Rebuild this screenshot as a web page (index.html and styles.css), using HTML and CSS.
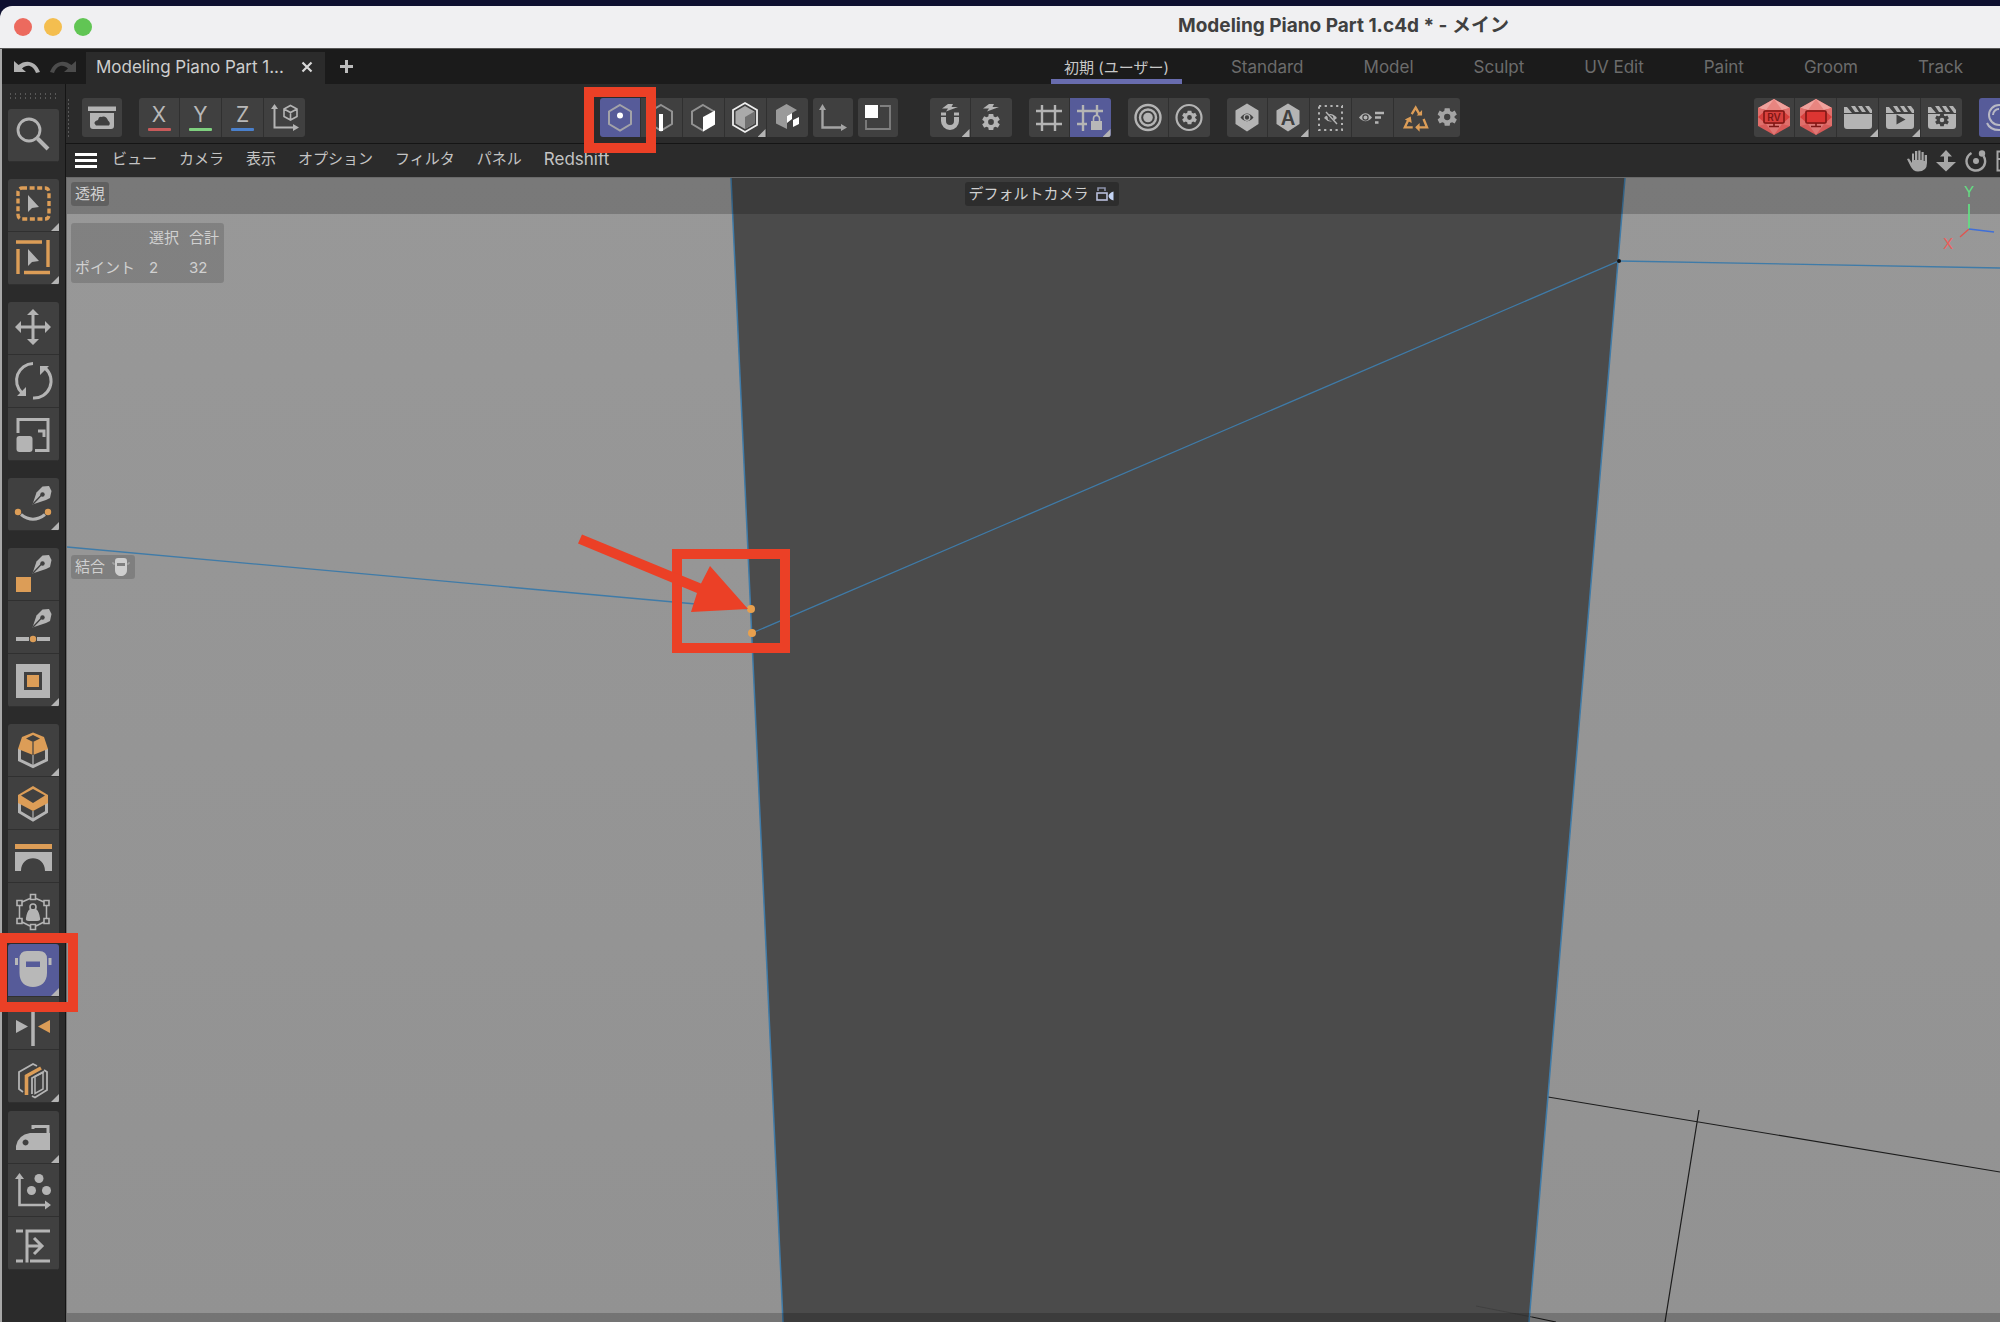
FILE: index.html
```html
<!DOCTYPE html>
<html lang="ja">
<head>
    <meta charset="utf-8">
    <title>Modeling Piano Part 1.c4d * - メイン</title>
    <link rel="stylesheet" href="styles.css">
</head>
<body>
    <!-- 共通アイコン -->
    <svg class="defs" width="0" height="0" aria-hidden="true">
        <symbol id="cursor" viewBox="0 0 12 18"><path d="M1 0V17L5 13L12 12Z" fill="#b4b4b4"/></symbol>
        <symbol id="pen" viewBox="0 0 20 20">
            <path d="M10.500 1.500L17 1L19.500 6L18 13L14 15L0.500 19.500L4.500 7.500Z" fill="#b4b4b4"/>
            <path d="M1 19L9.500 10" stroke="#404040" stroke-width="1.300"/>
            <circle cx="10.500" cy="9.500" r="2.200" fill="#404040"/>
        </symbol>
        <symbol id="gear" viewBox="-10 -10 20 20">
            <path fill-rule="evenodd" d="M-2.500 -9H2.500L3 -6.200L5 -5.200L7.600 -6.500L9.800 -2.500L7.500 -0.800V0.800L9.800 2.500L7.600 6.500L5 5.200L3 6.200L2.500 9H-2.500L-3 6.200L-5 5.200L-7.600 6.500L-9.800 2.500L-7.500 0.800V-0.800L-9.800 -2.500L-7.600 -6.500L-5 -5.200L-3 -6.200ZM0 -3.200A3.200 3.200 0 1 0 0 3.200A3.200 3.200 0 1 0 0 -3.200Z"/>
        </symbol>
        <symbol id="bolt" viewBox="0 0 18 8"><path d="M7 0H12L10.500 3H17L5 7.500L7 4.500H1Z" fill="#b4b4b4"/></symbol>
        <symbol id="clapper" viewBox="0 0 28 26">
            <path d="M0 9H28V21a3 3 0 0 1-3 3H3a3 3 0 0 1-3-3ZM0 2H3L8 8H0ZM7 1H11L15 7H11ZM14 1H18L22 7H18ZM21 1H25L28 5V8H26Z" fill="#b4b4b4"/>
        </symbol>
        <symbol id="ruby" viewBox="0 0 32 36">
            <path d="M16 0L32 9V27L16 36L0 27V9Z" fill="#d75a58"/>
            <path d="M16 0L32 9L24 11H8L0 9Z" fill="#f0a29d"/>
            <path d="M16 0L24 11H8Z" fill="#e88580"/>
            <path d="M0 9L8 11V25L0 27Z M32 9L24 11V25L32 27Z" fill="#e06f6b"/>
            <path d="M0 18L8 11H24L32 18L24 25H8Z" fill="#d8403d"/>
            <path d="M16 36L8 25H24Z" fill="#dd7774"/>
        </symbol>
    </svg>

    <header class="titlebar">
        <div class="lights"><i class="red"></i><i class="yellow"></i><i class="green"></i></div>
        <h1>Modeling Piano Part 1.c4d * - メイン</h1>
    </header>

    <div class="app">
        <div class="tabbar">
            <div class="history">
                <button aria-label="取り消し"><svg width="26" height="14" viewBox="0 0 26 14"><path d="M0 1V12H12L8 8.500C13 4 19 5 22 13L26 12C22 1 12 -1 4.500 5Z" fill="#b0b0b0"/></svg></button>
                <button aria-label="やり直し"><svg width="26" height="14" viewBox="0 0 26 14"><path d="M26 1V12H14L18 8.500C13 4 7 5 4 13L0 12C4 1 14 -1 21.500 5Z" fill="#4c4c4c"/></svg></button>
            </div>
            <div class="filetab">
                <span>Modeling Piano Part 1...</span>
                <button aria-label="閉じる"><svg width="12" height="12" viewBox="0 0 12 12"><path d="M1.500 1.500L10.500 10.500M10.500 1.500L1.500 10.500" stroke="#d8d8d8" stroke-width="2.200"/></svg></button>
            </div>
            <button class="add" aria-label="追加"><svg width="13" height="13" viewBox="0 0 13 13"><path d="M6.500 0V13M0 6.500H13" stroke="#bcbcbc" stroke-width="3"/></svg></button>
            <nav class="layouts">
                <button class="current">初期 (ユーザー)</button>
                <button>Standard</button>
                <button>Model</button>
                <button>Sculpt</button>
                <button>UV Edit</button>
                <button>Paint</button>
                <button>Groom</button>
                <button>Track</button>
            </nav>
        </div>

        <div class="workspace">
            <!-- 左ツールパレット -->
            <aside class="rail">
                <div class="grip"></div>
                <div class="tools">
                    <button aria-label="検索"><svg viewBox="0 0 51 53"><circle cx="21" cy="21" r="11" fill="none" stroke="#b4b4b4" stroke-width="2.800"/><path d="M29.500 29.500L40 40" stroke="#b4b4b4" stroke-width="4"/></svg></button>
                </div>
                <div class="tools">
                    <button class="more" aria-label="長方形選択"><svg viewBox="0 0 51 53"><rect x="10" y="9" width="31" height="31" rx="4" fill="none" stroke="#dc9d57" stroke-width="3.400" stroke-dasharray="5 2.600"/><use href="#cursor" x="19" y="16" width="12" height="18"/></svg></button>
                    <button class="more" aria-label="選択"><svg viewBox="0 0 51 53"><path d="M8 10H34M40 8V35M10 17V42M16 40.500H42" stroke="#dc9d57" stroke-width="3.400"/><use href="#cursor" x="19" y="17" width="12" height="18"/></svg></button>
                </div>
                <div class="tools">
                    <button aria-label="移動"><svg viewBox="0 0 51 53"><path d="M25 11V38M12 25H38" stroke="#b4b4b4" stroke-width="3"/><path d="M25 7L31 13H19ZM25 43L31 37H19ZM7 25L13 19V31ZM43 25L37 19V31Z" fill="#b4b4b4"/></svg></button>
                    <button aria-label="回転"><svg viewBox="0 0 51 53"><path d="M25 8.500A17 17 0 0 0 14 38M25 43A17 17 0 0 0 37 13" fill="none" stroke="#b4b4b4" stroke-width="3"/><path d="M18 32V41H9ZM32 11H41L32 20Z" fill="#b4b4b4"/></svg></button>
                    <button aria-label="スケール"><svg viewBox="0 0 51 53"><path d="M10 25V11.500H40V42.500H27M30 23H36V29" fill="none" stroke="#b4b4b4" stroke-width="3"/><rect x="8.500" y="28" width="16" height="16" rx="3" fill="#b4b4b4"/></svg></button>
                </div>
                <div class="tools">
                    <button class="more" aria-label="スプラインペン"><svg viewBox="0 0 51 53"><use href="#pen" x="24" y="7" width="20" height="20"/><path d="M13 36.500Q25 46 37 36.500" fill="none" stroke="#b4b4b4" stroke-width="3"/><circle cx="10" cy="34" r="3.200" fill="#dc9d57"/><circle cx="40" cy="34" r="3.200" fill="#dc9d57"/></svg></button>
                </div>
                <div class="tools">
                    <button aria-label="ポリゴンペン"><svg viewBox="0 0 51 53"><use href="#pen" x="24" y="6" width="20" height="20"/><rect x="8" y="29" width="15" height="15" fill="#dc9d57"/></svg></button>
                    <button aria-label="ラインカット"><svg viewBox="0 0 51 53"><use href="#pen" x="24" y="7" width="20" height="20"/><path d="M8 38H21M29 38H42" stroke="#b4b4b4" stroke-width="4"/><circle cx="25" cy="38" r="3.200" fill="#dc9d57"/></svg></button>
                    <button class="more" aria-label="面内に押し出し"><svg viewBox="0 0 51 53"><rect x="8" y="10" width="34" height="34" fill="#b4b4b4"/><rect x="16" y="18" width="18" height="18" fill="#404040"/><rect x="19" y="21" width="12" height="12" fill="#dc9d57"/></svg></button>
                </div>
                <div class="tools">
                    <button class="more" aria-label="ベベル"><svg viewBox="0 0 51 53"><path d="M11.500 25V36L25 42.500L38.500 36V25" fill="none" stroke="#b4b4b4" stroke-width="3"/><path d="M25 8.500L36 13L40 25L25 31L10 25L14 13Z" fill="#dc9d57"/><path d="M25 11L32 14.500L25 18L18 14.500Z" fill="#404040"/><path d="M25 18V31" stroke="#404040" stroke-width="1.200"/><path d="M25 31V42" stroke="#b4b4b4" stroke-width="1.200"/></svg></button>
                    <button aria-label="押し出し"><svg viewBox="0 0 51 53"><path d="M11.500 26V35L25 43L38.500 35V26" fill="none" stroke="#b4b4b4" stroke-width="3"/><path d="M25 9L40 18V26L25 34L10 26V18Z" fill="#dc9d57"/><path d="M25 12L37 18.500L25 26L13 18.500Z" fill="#404040"/><path d="M25 34V42" stroke="#b4b4b4" stroke-width="1.200"/></svg></button>
                    <button aria-label="ブリッジ"><svg viewBox="0 0 51 53"><rect x="7" y="14" width="37" height="5" fill="#dc9d57"/><path d="M7 22H44V41H37C37 24 13 24 13 41H7Z" fill="#b4b4b4"/></svg></button>
                    <button aria-label="ウェイト"><svg viewBox="0 0 51 53"><path d="M14 19L22 15.500M28 15.500L36 19M11.500 23V35M38.500 23V35M14 39L22 43M28 43L36 39" stroke="#b4b4b4" stroke-width="1.500"/><g fill="#404040" stroke="#b4b4b4" stroke-width="1.600"><path d="M22.500 11.500h5v5h-5ZM9 17.500h5v5h-5ZM36 17.500h5v5h-5ZM9 35.500h5v5h-5ZM36 35.500h5v5h-5ZM22.500 41.500h5v5h-5Z"/><circle cx="25" cy="24" r="3"/></g><path d="M22 26H28Q31 28 32 35Q33 38 29 38H21Q17 38 18 35Q19 28 22 26Z" fill="#b4b4b4"/></svg></button>
                </div>
                <div class="tools tight">
                    <button class="more active" aria-label="結合"><svg viewBox="0 0 51 53"><path d="M7 14h3v7h-3ZM40.500 14h3v7h-3ZM19 7H31Q39 7 39 15V29C39 38 33 43 25 43S11.500 38 11.500 29V15Q11.500 7 19 7ZM18 17.500V23H32V17.500Z" fill-rule="evenodd" fill="#b8b8b8"/></svg></button>
                    <button aria-label="対称"><svg viewBox="0 0 51 53"><path d="M25 12V49" stroke="#b4b4b4" stroke-width="3.500"/><path d="M8 23V36L20 29.500Z" fill="#b4b4b4"/><path d="M42 23V36L30 29.500Z" fill="#dc9d57"/></svg></button>
                    <button class="more" aria-label="ループカット"><svg viewBox="0 0 51 53"><path d="M15 42L11 39V22L25 14L29 16M24 46L27 47.500L39 40V22L36 20M24 44V28L36 21.500" fill="none" stroke="#b4b4b4" stroke-width="1.800"/><path d="M27 26.500L35 22.500V39L27 43.500Z" fill="none" stroke="#b4b4b4" stroke-width="1.500"/><path d="M18.500 45V26L33 18" fill="none" stroke="#dc9d57" stroke-width="3.600"/></svg></button>
                </div>
                <div class="tools tight">
                    <button class="more" aria-label="アイロン"><svg viewBox="0 0 51 53"><path d="M25 18V15.500H40V24" fill="none" stroke="#b4b4b4" stroke-width="3"/><path fill-rule="evenodd" d="M22 22H42V39H8V35Q10 24 22 22ZM17.500 28.500a3 3 0 1 0 .1 0Z" fill="#b4b4b4"/></svg></button>
                    <button aria-label="軸の配置"><svg viewBox="0 0 51 53"><path d="M11.500 14V41H38" fill="none" stroke="#b4b4b4" stroke-width="2.600"/><path d="M11.500 9L16 15H7ZM43 41L37 36.500V45.500Z" fill="#b4b4b4"/><g fill="#b4b4b4"><circle cx="31" cy="14.500" r="4.500"/><circle cx="23.500" cy="26.500" r="4.500"/><circle cx="38.500" cy="26.500" r="4.500"/></g></svg></button>
                    <button aria-label="整列"><svg viewBox="0 0 51 53"><path d="M8 14H15M19 14H42M8 44H15M22 44H42M19 12.500V45.500M19 29H34M26 21L34 29L26 37" fill="none" stroke="#b4b4b4" stroke-width="3"/></svg></button>
                </div>
            </aside>

            <main class="main">
                <!-- 上部ツールバー -->
                <div class="toolbar">
                    <div class="cluster left">
                        <div class="vgrip"></div>
                        <div class="set"><button aria-label="アセット"><svg viewBox="0 0 40 39"><path d="M6 8.500H34V13H6Z" fill="#b4b4b4"/><path fill-rule="evenodd" d="M8 15H32V28Q32 31 29 31H11Q8 31 8 28ZM14 27.500H27Q29 25 26 22.500Q24 17 19 19Q17 18 16 22Q10 24 14 27.500Z" fill="#b4b4b4"/></svg></button></div>
                        <div class="set">
                            <button class="axis x">X</button>
                            <button class="axis y">Y</button>
                            <button class="axis z">Z</button>
                            <button aria-label="座標系"><svg viewBox="0 0 40 39"><path d="M9.500 10V29.500H30" fill="none" stroke="#b4b4b4" stroke-width="2"/><path d="M9.500 6L13 11H6ZM34 29.500L28 26V33Z" fill="#b4b4b4"/><path d="M25.500 7.500L32 11V18.500L25.500 22L19 18.500V11ZM19 11L25.500 14.500L32 11M25.500 14.500V22" fill="none" stroke="#b4b4b4" stroke-width="1.600"/></svg></button>
                        </div>
                    </div>

                    <div class="cluster center">
                        <div class="modes">
                            <div class="set">
                                <button class="active" aria-label="ポイント"><svg viewBox="0 0 40 39"><path d="M20 7L31 13.500V26L20 32.500L9 26V13.500Z" fill="none" stroke="#a2a2a8" stroke-width="2"/><circle cx="20" cy="17.500" r="3" fill="#fff"/></svg></button>
                                <button aria-label="エッジ"><svg viewBox="0 0 40 39"><path d="M20 7L31 13.500V26L20 32.500L9 26V13.500Z" fill="none" stroke="#929292" stroke-width="2"/><path d="M20 16V33" stroke="#fff" stroke-width="4"/></svg></button>
                                <button aria-label="ポリゴン"><svg viewBox="0 0 40 39"><path d="M20 7L31 13.500V26L20 32.500L9 26V13.500Z" fill="none" stroke="#929292" stroke-width="2"/><path d="M20 19L32 12.500V26.500L20 33.500Z" fill="#fff"/></svg></button>
                                <button class="more" aria-label="モデル"><svg viewBox="0 0 40 39"><path d="M20 5L32 12V27L20 34L8 27V12Z" fill="#404040" stroke="#eee" stroke-width="1.800"/><path d="M20 8L29.500 13.500V25.500L20 31L10.500 25.500V13.500Z" fill="#aaa"/><path d="M20 19L29.500 13.500V25.500L20 31Z" fill="#707070"/></svg></button>
                                <button aria-label="オブジェクト"><svg viewBox="0 0 40 39"><path d="M19.500 6L30 12L20 18V31L9 25.500V12Z" fill="#9a9a9a"/><path d="M20 18L25 15V21L20 25ZM26 22L32 19V26L26 29Z" fill="#fff"/></svg></button>
                            </div>
                            <div class="set"><button aria-label="軸"><svg viewBox="0 0 40 39"><path d="M9.500 10V29.500H30" fill="none" stroke="#a4a4a4" stroke-width="2.400"/><path d="M9.500 6L13 12H6ZM34 29.500L28 26V33Z" fill="#a4a4a4"/></svg></button></div>
                            <div class="set"><button aria-label="ソロ"><svg viewBox="0 0 40 39"><path d="M22 8H32V31H8V22" fill="none" stroke="#808080" stroke-width="1.800"/><rect x="7" y="7" width="13" height="13" fill="#fff"/></svg></button></div>
                        </div>
                        <div class="set">
                            <button class="more" aria-label="スナップ"><svg viewBox="0 0 40 39"><use href="#bolt" x="11" y="6" width="18" height="8"/><path d="M13.500 19V23A6.500 6.500 0 0 0 26.500 23V19" fill="none" stroke="#b4b4b4" stroke-width="5"/><path d="M10 18.500H30" stroke="#404040" stroke-width="1.200"/><path d="M11 14.500h5v3h-5ZM24 14.500h5v3h-5Z" fill="#b4b4b4"/></svg></button>
                            <button aria-label="スナップ設定"><svg viewBox="0 0 40 39"><use href="#bolt" x="11" y="6" width="18" height="8"/><use href="#gear" x="11" y="15" width="18" height="18" fill="#b4b4b4"/></svg></button>
                        </div>
                        <div class="set">
                            <button aria-label="グリッド"><svg viewBox="0 0 40 39"><path d="M13 7V33M26 7V33M7 13H33M7 26H33" stroke="#b4b4b4" stroke-width="2.400"/></svg></button>
                            <button class="more active" aria-label="グリッド固定"><svg viewBox="0 0 40 39"><path d="M13 7V33M27 7V18M7 13H33M7 26H17" stroke="#b4b4b4" stroke-width="2.400"/><rect x="21" y="23" width="11" height="9" fill="#b8b8b8"/><path d="M23.500 23V20.500a3 3 0 0 1 6 0V23" fill="none" stroke="#b8b8b8" stroke-width="1.600"/></svg></button>
                        </div>
                        <div class="set">
                            <button aria-label="ソフト選択"><svg viewBox="0 0 40 39"><g fill="none" stroke="#b4b4b4" stroke-width="2.400"><circle cx="20" cy="19.500" r="12.500"/><circle cx="20" cy="19.500" r="8"/></g><circle cx="20" cy="19.500" r="4.800" fill="#b4b4b4"/></svg></button>
                            <button aria-label="ソフト選択設定"><svg viewBox="0 0 40 39"><circle cx="20" cy="19.500" r="12.500" fill="none" stroke="#b4b4b4" stroke-width="2.200"/><use href="#gear" x="13" y="12" width="15" height="15" fill="#b4b4b4"/></svg></button>
                        </div>
                        <div class="set">
                            <button aria-label="表示"><svg viewBox="0 0 40 39"><path d="M20 5.500L31.500 12.500V26L20 33.500L8.500 26V12.500Z" fill="#b4b4b4"/><path d="M13.500 19.500Q20 11.500 26.500 19.500Q20 27 13.500 19.500Z" fill="#404040"/><circle cx="20" cy="19.500" r="2.800" fill="none" stroke="#b4b4b4" stroke-width="1.300"/></svg></button>
                            <button class="more" aria-label="自動"><svg viewBox="0 0 40 39"><path d="M20 5.500L31.500 12.500V26L20 33.500L8.500 26V12.500Z" fill="#b4b4b4"/><text x="20" y="27" class="auto">A</text></svg></button>
                            <button aria-label="非表示"><svg viewBox="0 0 40 39"><rect x="9" y="8" width="23" height="24" fill="none" stroke="#b4b4b4" stroke-width="2" stroke-dasharray="2.200 3.500"/><path d="M14 20Q20.500 12 27 20Q20.500 27 14 20Z" fill="#b4b4b4"/><circle cx="20.500" cy="20" r="2.200" fill="none" stroke="#404040" stroke-width="1.200"/><path d="M15 14L26 26" stroke="#404040" stroke-width="2.600"/><path d="M16 14L27 26" stroke="#b4b4b4" stroke-width="1.400"/></svg></button>
                            <button aria-label="表示順"><svg viewBox="0 0 40 39"><path d="M7 19.500Q13.500 11 20 19.500Q13.500 27 7 19.500Z" fill="#b4b4b4"/><circle cx="13.500" cy="19.500" r="2.600" fill="none" stroke="#404040" stroke-width="1.200"/><path d="M23 15H32M23 19.500H29M23 24.500H26.500" stroke="#b4b4b4" stroke-width="2.400"/></svg></button>
                            <button class="wide" aria-label="リサイクル"><svg viewBox="0 0 67 39"><g fill="none" stroke="#dc9d57" stroke-width="2.400"><path d="M18 16L22 9.500L26 16.500M15 21L11 29.500H19M30 21L33.500 29.500H23"/></g><path d="M23 17.500H28.500V12ZM11 21.500L17 18.500L18 25ZM26 25V34L21.500 29.500Z" fill="#dc9d57"/><use href="#gear" x="44" y="9" width="20" height="20" fill="#a4a4a4"/></svg></button>
                        </div>
                    </div>

                    <div class="cluster right">
                        <div class="set">
                            <button aria-label="レンダービュー"><svg viewBox="0 0 40 39"><use href="#ruby" x="4" y="1" width="32" height="36"/><rect x="10" y="13" width="20" height="12" rx="1" fill="none" stroke="#7d1715" stroke-width="1.600"/><path d="M15 28.500H25M20 25V28" stroke="#7d1715" stroke-width="1.600"/><text x="20" y="23" class="rv">RV</text></svg></button>
                            <button aria-label="IPR"><svg viewBox="0 0 40 39"><use href="#ruby" x="4" y="1" width="32" height="36"/><rect x="10" y="13" width="20" height="12" rx="1" fill="#dc3532" stroke="#7d1715" stroke-width="1.600"/><path d="M15 28.500H25M20 25V28" stroke="#7d1715" stroke-width="1.600"/></svg></button>
                            <button class="more" aria-label="レンダリング"><svg viewBox="0 0 40 39"><use href="#clapper" x="6" y="7" width="28" height="26"/></svg></button>
                            <button class="more" aria-label="画像表示"><svg viewBox="0 0 40 39"><use href="#clapper" x="6" y="7" width="28" height="26"/><path d="M16.500 16.500V26.500L25.500 21.500Z" fill="#404040"/></svg></button>
                            <button aria-label="レンダリング設定"><svg viewBox="0 0 40 39"><use href="#clapper" x="6" y="7" width="28" height="26"/><use href="#gear" x="13" y="15" width="14" height="14" fill="#404040"/></svg></button>
                        </div>
                        <div class="set"><button class="active" aria-label="マテリアル"><svg viewBox="0 0 40 39"><circle cx="20" cy="17" r="10" fill="none" stroke="#b8b8c4" stroke-width="2"/><path d="M14 17A6 6 0 0 1 20 11M8 25Q11 32 20 32T32 25" fill="none" stroke="#b8b8c4" stroke-width="2"/></svg></button></div>
                    </div>
                </div>

                <div class="menubar">
                    <button class="burger" aria-label="メニュー"><i></i><i></i><i></i></button>
                    <nav>
                        <button>ビュー</button>
                        <button>カメラ</button>
                        <button>表示</button>
                        <button>オプション</button>
                        <button>フィルタ</button>
                        <button>パネル</button>
                        <button class="latin">Redshift</button>
                    </nav>
                    <div class="navicons">
                        <svg width="20" height="22" viewBox="0 0 20 22"><path d="M0 9L2 8.500L5 13V3.500h2V10h1V1h2.300V10h1V.5h2.200V10h1V2h2.200V11h1V5h2.300V13Q20 21.500 11 21.500Q6 21.500 3.500 16Z" fill="#a6a6a6"/></svg>
                        <svg width="20" height="22" viewBox="0 0 20 22"><path d="M10 0L16 6.500H12V12H20L10 21.500L0 12H8V6.500H4Z" fill="#a6a6a6"/></svg>
                        <svg width="22" height="22" viewBox="0 0 22 22"><path d="M6.500 3A9.300 9.300 0 1 0 18.500 6" fill="none" stroke="#a6a6a6" stroke-width="2.400"/><circle cx="11" cy="11" r="3" fill="#a6a6a6"/><circle cx="17" cy="3.500" r="3.200" fill="#a6a6a6"/></svg>
                        <svg width="22" height="22" viewBox="0 0 22 22"><path d="M1.500 1.500H20V20.500H1.500ZM1.500 9H20" fill="none" stroke="#a6a6a6" stroke-width="2"/></svg>
                    </div>
                </div>

                <!-- 3Dビュー -->
                <section class="viewport">
                    <svg class="scene" viewBox="67 178 1933 1144" preserveAspectRatio="xMinYMin slice">
                        <path d="M731 178H1625L1529 1322H783Z" fill="#4b4b4b"/>
                        <path d="M1476 1306L1532 1317" stroke="#404040"/>
                        <path d="M1548 1097L2000 1172M1699 1110L1665 1322M1532 1317L1556 1322" fill="none" stroke="#1c1c1c" stroke-width="1.200"/>
                        <path d="M67 547L751 609M752 633L1619 261L2000 268" fill="none" stroke="#3f7ba8" stroke-width="1.300"/>
                        <path d="M731 178L783 1322M1625 178L1529 1322" fill="none" stroke="#3f7ba8" stroke-width="1.500"/>
                        <circle cx="1619" cy="261" r="2" fill="#111"/>
                        <circle cx="751" cy="609" r="4" fill="#e8a04e"/>
                        <circle cx="752" cy="633" r="4" fill="#e8a04e"/>
                    </svg>
                    <div class="topband"></div>
                    <div class="bottomband"></div>
                    <span class="tag view">透視</span>
                    <table class="stats">
                        <tr><th></th><th>選択</th><th>合計</th></tr>
                        <tr><th>ポイント</th><td>2</td><td>32</td></tr>
                    </table>
                    <span class="tag mode">結合 <svg width="20" height="18" viewBox="0 0 20 18"><path fill-rule="evenodd" d="M7 0H13Q16 0 16 3V12C16 16 13 18 10 18S4 16 4 12V3Q4 0 7 0ZM6 5V8H14V5Z" fill="#cfcfcf"/><path d="M1 5H3V7M19 5H17V7" fill="none" stroke="#b0b0b0"/></svg></span>
                    <span class="tag camera">デフォルトカメラ <svg width="20" height="16" viewBox="0 0 20 16"><rect x="2" y="7" width="10" height="7" fill="none" stroke="#b9bfdc" stroke-width="1.600"/><path d="M3 5V2H10V5" fill="none" stroke="#8d92ab" stroke-width="1.600"/><path d="M18.500 5.500V14.500Q14 13 13.500 10Q14 7 18.500 5.500Z" fill="#c4d4f4"/></svg></span>
                    <svg class="gizmo" width="60" height="78" viewBox="0 -6 60 78">
                        <path d="M29 20V45" stroke="#64dc83" stroke-width="1.800"/>
                        <path d="M29 45L20 53" stroke="#e0534f" stroke-width="1.400"/>
                        <path d="M29 45L54 48" stroke="#3f6fd8" stroke-width="1.600"/>
                        <text x="29" y="13" fill="#64dc83">Y</text>
                        <text x="8" y="65" fill="#e8605c">X</text>
                    </svg>
                </section>
            </main>
        </div>
    </div>

    <!-- 強調枠と矢印 -->
    <svg class="notes" viewBox="0 0 2000 1322" preserveAspectRatio="xMinYMin meet">
        <g fill="none" stroke="#eb4026" stroke-width="10">
            <rect x="589" y="92" width="62" height="56"/>
            <rect x="677" y="554" width="108" height="94"/>
            <rect x="2" y="938" width="71" height="69"/>
        </g>
        <path d="M582 534.500L701 583.500L710 566L748 609L691 612L697 593L578 543.500Z" fill="#eb4026"/>
    </svg>
</body>
</html>
```

FILE: styles.css
```css
* {
    box-sizing: border-box;
}

body {
    margin: 0;
    height: 100vh;
    padding-top: 6px;
    display: flex;
    flex-direction: column;
    overflow: hidden;
    background: #0e1030;
    color: #c4c4c4;
    font-family: Inter, "Noto Sans CJK JP", sans-serif;
    font-size: 17px;
}

button {
    margin: 0;
    padding: 0;
    border: 0;
    background: none;
    color: inherit;
    font: inherit;
    display: flex;
    align-items: center;
    justify-content: center;
}

svg {
    display: block;
    flex: none;
}

.defs {
    position: absolute;
}

/* タイトルバー */
.titlebar {
    flex: none;
    height: 43px;
    display: flex;
    align-items: center;
    background: #f0f0f2;
    border-radius: 12px 0 0 0;
    border-bottom: 1px solid #555;
}

.lights {
    display: flex;
    gap: 12px;
    padding-left: 14px;
    width: 58.9%;
}

.lights i {
    width: 18px;
    height: 18px;
    border-radius: 50%;
}

.red { background: #ec6a5e; }
.yellow { background: #f4be4f; }
.green { background: #61c554; }

.titlebar h1 {
    margin: 0;
    padding-bottom: 2px;
    font-size: 19px;
    font-weight: 700;
    line-height: 26px;
    color: #404040;
    white-space: nowrap;
}

.app {
    flex: 1;
    min-height: 0;
    display: flex;
    flex-direction: column;
    border-left: 2px solid #a8a8a8;
    background: #2b2b2b;
}

/* タブ */
.tabbar {
    flex: none;
    height: 35px;
    display: flex;
    align-items: stretch;
    background: #1b1b1b;
}

.history {
    width: 84px;
    padding-left: 12px;
    display: flex;
    align-items: center;
    gap: 10px;
}

.filetab {
    width: 239px;
    margin-top: 3px;
    padding: 0 12px 2px 10px;
    display: flex;
    align-items: center;
    justify-content: space-between;
    background: #2b2b2b;
    color: #cecece;
}

.add {
    padding: 0 15px;
}

.layouts {
    margin-left: auto;
    padding-right: 26px;
    display: flex;
    gap: 38px;
    color: #6c6c6c;
}

.layouts button {
    padding: 0 11px;
    border-top: 5px solid transparent;
    border-bottom: 5px solid transparent;
    white-space: nowrap;
}

.layouts .current {
    padding: 0 13px;
    font-size: 15px;
    color: #c8c8c8;
    border-bottom-color: #686cae;
}

.workspace {
    flex: 1;
    min-height: 0;
    display: flex;
}

/* ツールパレット */
.rail {
    flex: none;
    width: 64px;
    padding: 8px 6px 0;
    border-right: 1px solid #151515;
    overflow: hidden;
}

.grip, .vgrip {
    background-image: radial-gradient(#585858 1px, transparent 1px);
    background-size: 5px 4px;
}

.grip {
    height: 8px;
    margin-bottom: 9px;
}

.tools {
    margin-bottom: 17px;
    border-radius: 3px;
    overflow: hidden;
}

.tools:has(+ .tight), .tools.tight {
    margin-bottom: 8px;
}

.tools button {
    position: relative;
    width: 51px;
    height: 53px;
    background: #404040;
    border-bottom: 1px solid #303030;
}

.tools svg {
    width: 51px;
    height: 53px;
}

.tools .active {
    background: #565b99;
}

.more::after {
    content: "";
    position: absolute;
    right: 0;
    bottom: 0;
    width: 8px;
    height: 8px;
    background: #b4b4b4;
    clip-path: polygon(100% 0, 100% 100%, 0 100%);
}

.main {
    flex: 1;
    min-width: 0;
    display: flex;
    flex-direction: column;
}

/* ツールバー */
.toolbar {
    flex: none;
    height: 60px;
    display: flex;
    align-items: flex-start;
    justify-content: space-between;
    padding-top: 14px;
    border-bottom: 1px solid #151515;
    overflow: hidden;
}

.cluster {
    flex: none;
    display: flex;
    gap: 17px;
}

.vgrip {
    width: 6px;
    margin-right: -7px;
}

.modes {
    display: flex;
    gap: 5px;
    margin-right: 15px;
}

.set {
    display: flex;
    border-radius: 3px;
    overflow: hidden;
}

.set button {
    position: relative;
    width: 42px;
    height: 39px;
    border-left: 1px solid #303030;
    background: #404040;
}

.set .active {
    background: #565b99;
}

.set button:first-child {
    width: 40px;
    border-left: 0;
}

.set .wide {
    width: 67px;
}

.set svg {
    width: 40px;
    height: 39px;
}

.set .wide svg {
    width: 66px;
}

.set .axis {
    font-size: 21px;
    line-height: 22px;
    flex-direction: column;
    gap: 2px;
    color: #b8b8b8;
}

.axis::after {
    content: "";
    width: 23px;
    height: 3px;
    border-radius: 1px;
}

.axis.x::after { background: #c85a5a; }
.axis.y::after { background: #7fd07f; }
.axis.z::after { background: #4a80cc; }

.right {
    margin-right: -19px;
}

.rv, .auto {
    font-size: 10px;
    font-weight: 600;
    text-anchor: middle;
    fill: #7d1715;
}

.auto {
    font-size: 20px;
    fill: #404040;
}

/* メニュー */
.menubar {
    flex: none;
    height: 33px;
    display: flex;
    align-items: center;
    padding-left: 9px;
    overflow: hidden;
}

.burger {
    flex-direction: column;
    gap: 3px;
    margin-right: 15px;
}

.burger i {
    width: 22px;
    height: 3px;
    background: #fff;
}

.menubar nav {
    display: flex;
    gap: 22px;
    padding-bottom: 4px;
}

.menubar nav button {
    font-size: 15px;
    line-height: 24px;
    white-space: nowrap;
}

.menubar nav .latin {
    font-size: 17px;
}

.navicons {
    margin-left: auto;
    margin-right: -18px;
    display: flex;
    gap: 9px;
}

/* ビューポート */
.viewport {
    flex: 1;
    min-height: 0;
    position: relative;
    border-top: 1px solid #6a6a6a;
    border-left: 1px solid #6a6a6a;
    background: linear-gradient(#989898, #929292);
    overflow: hidden;
    color: #d0d0d0;
    font-size: 15px;
}

.scene {
    width: 100%;
    height: 100%;
}

.topband, .bottomband {
    position: absolute;
    left: 0;
    right: 0;
    background: rgba(0, 0, 0, 0.2);
}

.topband {
    top: 0;
    height: 36px;
}

.bottomband {
    bottom: 0;
    height: 9px;
}

.tag {
    position: absolute;
    height: 24px;
    padding: 0 4px;
    display: flex;
    align-items: center;
    gap: 6px;
    border-radius: 3px;
    line-height: 24px;
    white-space: nowrap;
    background: rgba(0, 0, 0, 0.2);
}

.view {
    left: 4px;
    top: 4px;
}

.mode {
    left: 4px;
    top: 377px;
    background: rgba(0, 0, 0, 0.15);
}

.camera {
    left: 50%;
    top: 4px;
    transform: translateX(-50%);
    margin-left: 8px;
    background: rgba(0, 0, 0, 0.25);
}

.stats {
    position: absolute;
    left: 4px;
    top: 45px;
    width: 153px;
    height: 60px;
    border-spacing: 0;
    border-radius: 3px;
    background: rgba(0, 0, 0, 0.15);
    line-height: 24px;
}

.stats th, .stats td {
    padding: 0 0 0 4px;
    text-align: left;
    font-weight: normal;
}

.stats th:first-child {
    width: 74px;
}

.stats th:nth-child(2) {
    width: 40px;
}

.gizmo {
    position: absolute;
    right: 0;
    top: 0;
    font-size: 15px;
    text-anchor: middle;
}

.notes {
    position: absolute;
    left: 0;
    top: 0;
    width: 100vw;
    pointer-events: none;
}
```
